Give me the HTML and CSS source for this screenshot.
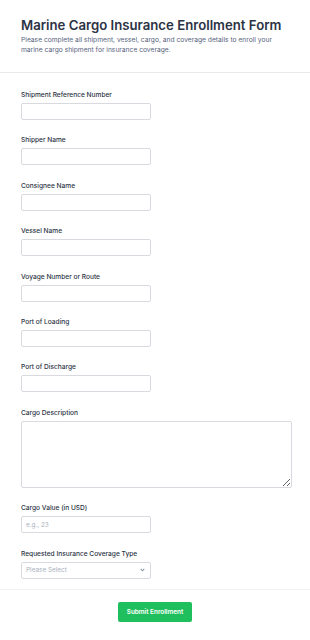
FILE: index.html
```html
<!DOCTYPE html>
<html lang="en">
<head>
    <meta charset="UTF-8">
    <meta name="viewport" content="width=device-width, initial-scale=1.0">
    <title>Marine Cargo Insurance Enrollment Form</title>
    <link rel="stylesheet" href="styles.css">
</head>
<body>
    <div class="header">
        <h1>Marine Cargo Insurance Enrollment Form</h1>
        <p>Please complete all shipment, vessel, cargo, and coverage details to enroll your marine cargo shipment for insurance coverage.</p>
    </div>

    <form class="form">
        <div class="field">
            <label for="shipmentRef">Shipment Reference Number</label>
            <input type="text" id="shipmentRef" class="short">
        </div>
        <div class="field">
            <label for="shipper">Shipper Name</label>
            <input type="text" id="shipper" class="short">
        </div>
        <div class="field">
            <label for="consignee">Consignee Name</label>
            <input type="text" id="consignee" class="short">
        </div>
        <div class="field">
            <label for="vessel">Vessel Name</label>
            <input type="text" id="vessel" class="short">
        </div>
        <div class="field">
            <label for="voyage">Voyage Number or Route</label>
            <input type="text" id="voyage" class="short">
        </div>
        <div class="field">
            <label for="loading">Port of Loading</label>
            <input type="text" id="loading" class="short">
        </div>
        <div class="field">
            <label for="discharge">Port of Discharge</label>
            <input type="text" id="discharge" class="short">
        </div>
        <div class="field">
            <label for="cargoDesc">Cargo Description</label>
            <textarea id="cargoDesc"></textarea>
        </div>
        <div class="field">
            <label for="cargoValue">Cargo Value (in USD)</label>
            <input type="text" id="cargoValue" class="short" placeholder="e.g., 23">
        </div>
        <div class="field">
            <label for="coverage">Requested Insurance Coverage Type</label>
            <div class="select short">
                <span>Please Select</span>
                <svg width="5" height="4" viewBox="0 0 5 4"><path d="M0.7 0.9 L2.5 2.8 L4.3 0.9" fill="none" stroke="#8a93a6" stroke-width="1.1"/></svg>
            </div>
        </div>
    </form>

    <div class="footer">
        <button type="button">Submit Enrollment</button>
    </div>
</body>
</html>
```

FILE: styles.css
```css
* {
    box-sizing: border-box;
    margin: 0;
    padding: 0;
    font-family: 'Inter', 'Liberation Sans', sans-serif;
}
body {
    background: #fff;
    width: 310px;
}
.header {
    padding: 17px 21px 17px;
    border-bottom: 1px solid #e6e8ec;
}
.header h1 {
    font-size: 13.2px;
    line-height: 16px;
    font-weight: 600;
    color: #2c3345;
}
.header p {
    margin-top: 2px;
    font-size: 6.7px;
    line-height: 10px;
    color: #57647e;
}
.form {
    padding: 17px 21px 10px;
    border-bottom: 1px solid #f1f2f4;
}
.field {
    margin-bottom: 15.4px;
}
.field:last-child {
    margin-bottom: 0;
}
label {
    display: block;
    font-size: 6.6px;
    line-height: 10px;
    font-weight: 500;
    color: #2c3345;
    margin-bottom: 3px;
}
input, .select {
    display: block;
    height: 17px;
    border: 1px solid #d8dae0;
    border-radius: 2px;
    background: #fff;
    font-size: 6.4px;
    padding: 0 4px;
    color: #2c3345;
}
.short {
    width: 130px;
}
input::placeholder {
    color: #a9afbd;
}
textarea {
    display: block;
    width: 271px;
    height: 67px;
    border: 1px solid #d8dae0;
    border-radius: 2px;
    resize: vertical;
}
.select {
    display: flex;
    align-items: center;
    justify-content: space-between;
    color: #a9afbd;
    padding: 0 5px 0 4px;
}
.footer {
    display: flex;
    justify-content: center;
    padding: 12px 0 20px;
}
.footer button {
    width: 74px;
    height: 20px;
    background: #1fbf5e;
    color: #fff;
    border: none;
    border-radius: 2px;
    font-size: 6.4px;
    font-weight: 600;
    cursor: pointer;
}
```
